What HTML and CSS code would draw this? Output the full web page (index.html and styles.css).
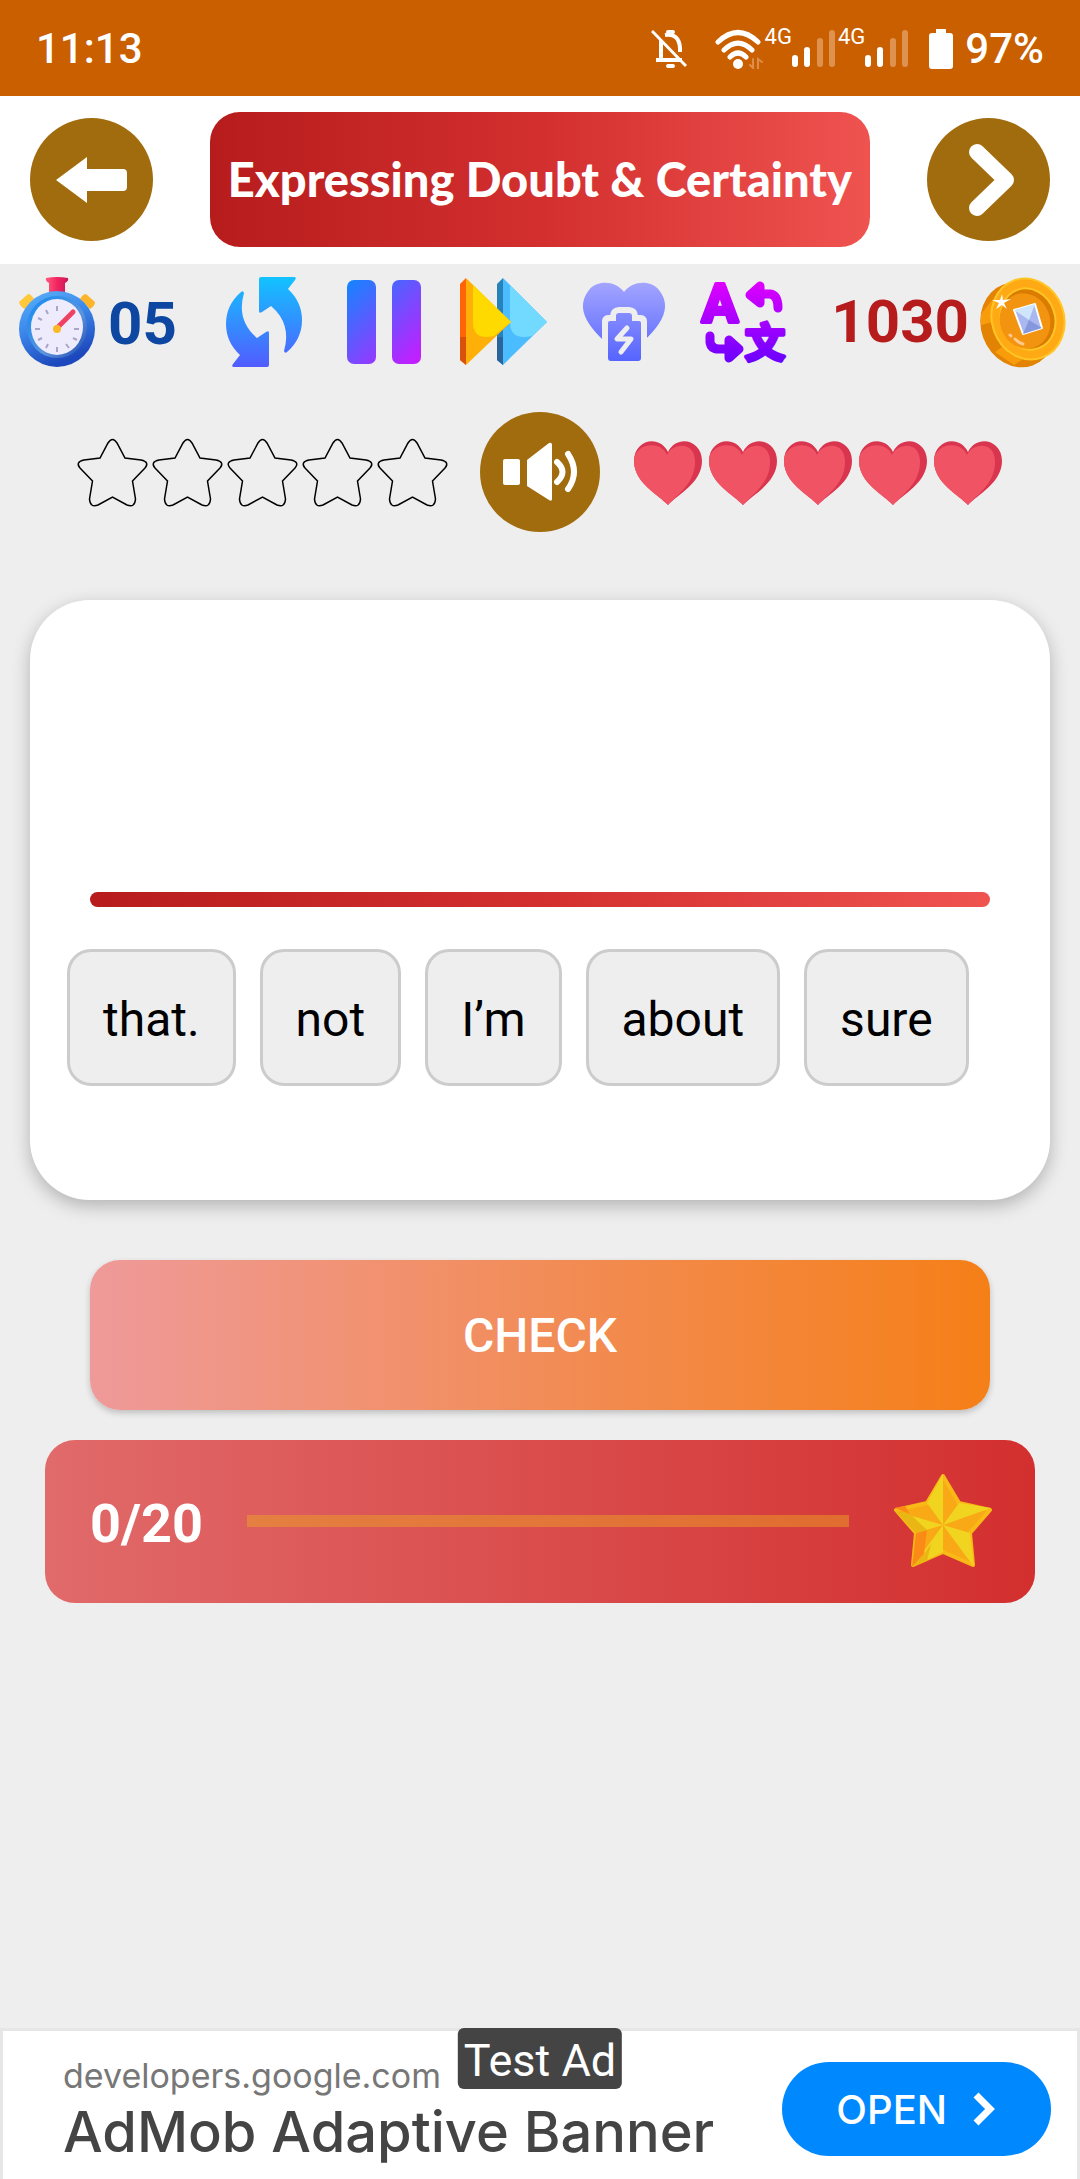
FILE: index.html
```html
<!DOCTYPE html>
<html lang="en">
<head>
    <meta charset="UTF-8">
    <meta name="viewport" content="width=device-width, initial-scale=1.0">
    <title>Expressing Doubt &amp; Certainty</title>
    <link rel="stylesheet" href="styles.css">
</head>
<body>
    <!-- Status bar -->
    <div class="status-bar">
        <span class="clock">11:13</span>
        <div class="status-icons">
            <svg class="bell" viewBox="0 0 36 38" fill="none" stroke="#fff" stroke-width="4">
                <path d="M10 10V30M5 30H31M14 5Q28 3 29 18V22" />
                <path d="M17 2H22M17 36H22" stroke-linecap="round" />
                <path d="M1 1L35 36" stroke-width="3" />
            </svg>
            <svg class="wifi" viewBox="0 0 50 40" fill="none" stroke="#fff" stroke-width="5" stroke-linecap="round">
                <path d="M3 13Q23 -6 43 13M9 21Q23 7 37 21M15 28Q23 20 31 28" />
                <circle cx="23" cy="35" r="5" fill="#fff" stroke="none" />
                <path d="M38 30V39L35 36M43 40V30L47 33" stroke="#dd8e4d" stroke-width="2" />
            </svg>
            <div class="network">
                <span>4G</span>
                <svg class="signal" viewBox="0 0 43 40" stroke="#fff" stroke-width="6" stroke-linecap="round">
                    <path d="M3 29V35M15 21V35" />
                    <path d="M28 12V35M40 4V35" stroke="#df9250" />
                </svg>
            </div>
            <div class="network">
                <span>4G</span>
                <svg class="signal" viewBox="0 0 43 40" stroke="#fff" stroke-width="6" stroke-linecap="round">
                    <path d="M3 29V35M15 21V35" />
                    <path d="M28 12V35M40 4V35" stroke="#df9250" />
                </svg>
            </div>
            <svg class="battery" viewBox="0 0 24 40" fill="#fff">
                <rect x="7" width="10" height="10" />
                <rect y="4" width="24" height="36" rx="3" />
            </svg>
            <span class="percent">97%</span>
        </div>
    </div>

    <!-- Lesson header -->
    <header class="header">
        <button class="round-button" aria-label="Back">
            <svg viewBox="0 0 123 123" fill="#fff">
                <path d="M26 62L57 39V51H93Q97 51 97 55V69Q97 73 93 73H57V85Z" />
            </svg>
        </button>
        <h1 class="title">Expressing Doubt &amp; Certainty</h1>
        <button class="round-button" aria-label="Next">
            <svg viewBox="0 0 123 123" fill="none" stroke="#fff" stroke-width="16" stroke-linecap="round" stroke-linejoin="round">
                <path d="M50 34L79 62L50 90" />
            </svg>
        </button>
    </header>

    <main class="lesson">
        <div class="toolbar">
            <div class="timer">
                <svg class="icon" viewBox="0 0 90 90">
                    <defs>
                        <linearGradient id="ring" x1="0" y1="0" x2="0.4" y2="1">
                            <stop offset="0" stop-color="#5db4fa" />
                            <stop offset="0.5" stop-color="#3b86ea" />
                            <stop offset="1" stop-color="#1d48bd" />
                        </linearGradient>
                        <linearGradient id="rim" x1="0" y1="0" x2="1" y2="1">
                            <stop offset="0" stop-color="#0f8bf5" />
                            <stop offset="0.6" stop-color="#5c94dc" />
                            <stop offset="1" stop-color="#1c46ae" />
                        </linearGradient>
                        <linearGradient id="crown">
                            <stop offset="0" stop-color="#ff5b7c" />
                            <stop offset="0.5" stop-color="#f22560" />
                            <stop offset="1" stop-color="#c8185c" />
                        </linearGradient>
                    </defs>
                    <path d="M34 1Q45 -1 56 1Q57 4 53 6V16H37V6Q33 4 34 1Z" fill="url(#crown)" />
                    <path d="M7 25L16 17Q19 17 22 22L13 32Q8 30 7 25Z" fill="#ffc83b" />
                    <path d="M83 25L74 17Q71 17 68 22L78 32Q83 29 83 25Z" fill="#fcb52b" />
                    <circle cx="45" cy="52" r="38" fill="url(#ring)" />
                    <ellipse cx="45" cy="50" rx="30" ry="31" fill="url(#rim)" />
                    <ellipse cx="45" cy="50" rx="26" ry="28" fill="#eeecfc" />
                    <path d="M45 29V34M45 70V75M23 52H28M62 52H67M34 33L36 37M54 67L57 71M34 71L36 67M26 41L30 43M26 63L30 61M61 61L65 63" stroke="#aaa5c6" stroke-width="2" />
                    <path d="M46 50L61 35" stroke="#ef4263" stroke-width="5" stroke-linecap="round" />
                    <circle cx="45" cy="52" r="4" fill="#fbb928" />
                </svg>
                <span class="seconds">05</span>
            </div>

            <div class="tools">
                <button class="tool" aria-label="Restart">
                    <svg class="icon" viewBox="0 0 90 90">
                        <defs>
                            <linearGradient id="turn" gradientUnits="userSpaceOnUse" x1="0" y1="0" x2="0" y2="90">
                                <stop offset="0" stop-color="#12c3ff" />
                                <stop offset="1" stop-color="#525cff" />
                            </linearGradient>
                        </defs>
                        <path fill="url(#turn)" d="M40 2Q40 0 42 0H75Q78 0 76 3L69 12Q83 25 83 43Q83 62 68 75Q66 77 65 74Q73 47 52 29L43 35Q40 37 40 34Z" />
                        <path fill="url(#turn)" d="M50 88Q50 90 48 90H15Q12 90 14 87L21 78Q7 65 7 47Q7 28 22 15Q24 13 25 16Q17 43 38 61L47 55Q50 53 50 56Z" />
                    </svg>
                </button>
                <button class="tool" aria-label="Pause">
                    <svg class="icon" viewBox="0 0 90 90">
                        <defs>
                            <linearGradient id="pause" gradientUnits="userSpaceOnUse" x1="5" y1="10" x2="80" y2="85">
                                <stop offset="0" stop-color="#1783ff" />
                                <stop offset="1" stop-color="#c81bff" />
                            </linearGradient>
                        </defs>
                        <rect x="8" y="3" width="29" height="84" rx="7" fill="url(#pause)" />
                        <rect x="53" y="3" width="29" height="84" rx="7" fill="url(#pause)" />
                    </svg>
                </button>
                <button class="tool" aria-label="Skip">
                    <svg class="icon" viewBox="0 0 90 90">
                        <path d="M44 1L38 7V83L44 88Z" fill="#2882ba" />
                        <path d="M38 60H44V88L38 83Z" fill="#2b649a" />
                        <path d="M44 1L88 45L44 88Z" fill="#4bbcff" />
                        <path d="M51 8L88 45L73 59Q51 64 51 45Z" fill="#73daff" />
                        <path d="M7 1L1 7V83L7 88Z" fill="#ff6508" />
                        <path d="M1 60H7V88L1 83Z" fill="#d9520c" />
                        <path d="M7 1L52 45L7 88Z" fill="#ffb008" />
                        <path d="M14 8L52 45L35 59Q14 64 14 45Z" fill="#ffda00" />
                    </svg>
                </button>
                <button class="tool" aria-label="Refill hearts">
                    <svg class="icon" viewBox="0 0 90 90">
                        <defs>
                            <linearGradient id="refill" gradientUnits="userSpaceOnUse" x1="0" y1="5" x2="0" y2="84">
                                <stop offset="0" stop-color="#a3a5ff" />
                                <stop offset="1" stop-color="#5664ff" />
                            </linearGradient>
                        </defs>
                        <path d="M45 15C54 3 72 3 80 13C98 36 73 58 45 81C17 58 -8 36 10 13C18 3 36 3 45 15Z" fill="url(#refill)" />
                        <path class="cutout" d="M29 44H37V39Q37 36 40 36H50Q53 36 53 39V44H62V90H29Z" stroke-width="12" stroke-linejoin="round" />
                        <path d="M31 44H37V39Q37 36 40 36H50Q53 36 53 39V44H60Q62 44 62 46V81Q62 84 59 84H32Q29 84 29 81V46Q29 44 31 44Z" fill="url(#refill)" />
                        <path d="M48 51L38 62H52L42 75" fill="none" stroke="#eee" stroke-width="5" stroke-linecap="round" stroke-linejoin="round" />
                    </svg>
                </button>
                <button class="tool" aria-label="Translate">
                    <svg class="icon translate" viewBox="0 0 90 90">
                        <defs>
                            <linearGradient id="lang" gradientUnits="userSpaceOnUse" x1="0" y1="5" x2="0" y2="85">
                                <stop offset="0" stop-color="#df00ff" />
                                <stop offset="1" stop-color="#6c00ff" />
                            </linearGradient>
                        </defs>
                        <g fill="url(#lang)" stroke="url(#lang)" stroke-linejoin="round">
                            <text class="latin" x="21" y="45" text-anchor="middle">A</text>
                            <text class="han" x="66" y="80" text-anchor="middle">文</text>
                            <path d="M51 18L61 9V26Z" stroke-width="9" />
                            <path d="M40 72L30 63V81Z" stroke-width="9" />
                        </g>
                        <path d="M60 17H71Q79 18 79 31M11 59V65Q12 72 20 72H32" fill="none" stroke="url(#lang)" stroke-width="9" stroke-linecap="round" />
                    </svg>
                </button>
            </div>

            <div class="coins">
                <span>1030</span>
                <svg class="icon" viewBox="0 0 90 90">
                    <ellipse cx="40" cy="48" rx="37" ry="43" transform="rotate(-20 40 48)" fill="#e38304" />
                    <path d="M3 37L15 22V45L3 48ZM17 75L27 68L48 80L36 88Z" fill="#f99c0c" />
                    <ellipse cx="50" cy="42" rx="36" ry="41" transform="rotate(-20 50 42)" fill="#ffaa14" stroke="#ffc526" stroke-width="2" />
                    <ellipse cx="50" cy="42" rx="27" ry="31" transform="rotate(-20 50 42)" fill="#d97c00" stroke="#ffc526" stroke-width="2" />
                    <ellipse cx="47" cy="44" rx="25" ry="28" transform="rotate(-20 47 44)" fill="#f39410" />
                    <path d="M36 33L57 27L64 51L45 57Z" fill="#aab8ef" stroke="#fff" stroke-width="2" stroke-linejoin="round" />
                    <path d="M36 33L57 27L51 43Z" fill="#cfe5fc" />
                    <path d="M45 57L51 43L64 51Z" fill="#8598dd" />
                    <path d="M32 58L33 59M37 62Q41 66 45 67" fill="none" stroke="#ffc88c" stroke-width="3" stroke-linecap="round" />
                    <path d="M24 17L25 23L33 22L26 26L29 32L24 28L18 32L21 26L14 23L22 23Z" fill="#fff" />
                </svg>
            </div>
        </div>

        <!-- Shapes repeated in the score row -->
        <svg class="symbols" aria-hidden="true">
            <symbol id="star" viewBox="0 0 75 75">
                <path d="M33 8Q37.500 1 42 8L50 23L66 25Q75 27 70 33L57.500 46L60.500 64Q60 73 52 70L37.500 62L23 70Q15 73 14.500 64L17.500 46L5 33Q0 27 9 25L25 23Z" fill="none" stroke="#000" stroke-width="1.500" />
            </symbol>
            <symbol id="heart" viewBox="0 0 75 75">
                <path d="M38 70C29 60 4 48 4 26C4 5 29 -1 38 17C47 -1 72 5 72 26C72 48 47 60 38 70Z" fill="#da354f" />
                <path d="M38 70C29 60 4 48 4 26C4 9 30 4 37 20C42 8 65 5 65 27C65 48 48 59 38 70Z" fill="#f05464" />
            </symbol>
        </svg>

        <div class="score">
            <div class="score-group">
                <svg class="mark"><use href="#star" /></svg>
                <svg class="mark"><use href="#star" /></svg>
                <svg class="mark"><use href="#star" /></svg>
                <svg class="mark"><use href="#star" /></svg>
                <svg class="mark"><use href="#star" /></svg>
            </div>
            <button class="round-button speaker" aria-label="Play sound">
                <svg viewBox="0 0 120 120" fill="#fff">
                    <rect x="23" y="47" width="17" height="26" rx="2" />
                    <path d="M47 48L69 31Q72 30 72 33V87Q72 90 69 88L47 74Z" />
                    <path d="M77 50Q88 60 77 70M88 42Q100 60 88 77" fill="none" stroke="#fff" stroke-width="6" stroke-linecap="round" />
                </svg>
            </button>
            <div class="score-group">
                <svg class="mark"><use href="#heart" /></svg>
                <svg class="mark"><use href="#heart" /></svg>
                <svg class="mark"><use href="#heart" /></svg>
                <svg class="mark"><use href="#heart" /></svg>
                <svg class="mark"><use href="#heart" /></svg>
            </div>
        </div>

        <section class="card">
            <div class="answer"></div>
            <div class="words">
                <button class="word">that.</button>
                <button class="word">not</button>
                <button class="word">I’m</button>
                <button class="word">about</button>
                <button class="word">sure</button>
            </div>
        </section>

        <button class="check">CHECK</button>

        <div class="progress-card">
            <label for="progress">0/20</label>
            <progress id="progress" value="0" max="20"></progress>
            <svg class="gold-star" viewBox="0 0 100 100">
                <path d="M50 5L66 32L97 39L77 62L80 94L50 81L20 94L23 62L3 39L34 32Z" fill="#f9a916" stroke="#f9b916" stroke-width="4" stroke-linejoin="round" />
                <path d="M50 3L34 32L50 54ZM66 32L98 37L50 54ZM77 62L81 96L50 54ZM50 81L19 96L50 54ZM23 62L2 40L50 54Z" fill="#f1d41f" />
                <path d="M2 37L12 35L17 43ZM23 62L34 59L31 83L19 96Z" fill="#fb8b16" />
                <path d="M2 40L17 43L34 59L23 62ZM31 83L38 73L34 90L19 96Z" fill="#e9b613" />
            </svg>
        </div>
    </main>

    <!-- Ad banner -->
    <footer class="ad">
        <span class="ad-label">Test Ad</span>
        <div class="ad-text">
            <div class="ad-site">developers.google.com</div>
            <div class="ad-name">AdMob Adaptive Banner</div>
        </div>
        <a class="ad-open" href="#">
            OPEN
            <svg viewBox="0 0 24 34" fill="none" stroke="#fff" stroke-width="7">
                <path d="M3 3L17 17L3 31" />
            </svg>
        </a>
    </footer>
</body>
</html>
```
FILE: styles.css
```css
* {
    box-sizing: border-box;
}

body {
    margin: 0;
    min-height: 100vh;
    display: flex;
    flex-direction: column;
    font-family: Roboto, "Liberation Sans", sans-serif;
    background: #eee;
    color: #000;
}

button {
    font-family: inherit;
    border: none;
    padding: 0;
    cursor: pointer;
}

svg {
    display: block;
    flex-shrink: 0;
}

/* Status bar */
.status-bar {
    height: 96px;
    padding: 2px 36px 0;
    display: flex;
    align-items: center;
    justify-content: space-between;
    background: #ca5f00;
    color: #fff;
    font-size: 42px;
    font-weight: 500;
    line-height: 48px;
}

.status-icons {
    display: flex;
    align-items: center;
}

.bell {
    width: 36px;
    height: 38px;
    margin-right: 28px;
}

.wifi {
    width: 50px;
    height: 40px;
}

.network {
    display: flex;
    align-items: flex-start;
    font-size: 22px;
    font-weight: 400;
    line-height: 16px;
    margin-right: 3px;
}

.signal {
    width: 43px;
    height: 40px;
}

.battery {
    width: 24px;
    height: 40px;
    margin: 0 12px 0 18px;
}

/* Header */
.header {
    min-height: 168px;
    padding: 15px 30px 17px;
    display: flex;
    align-items: center;
    justify-content: space-between;
    background: #fff;
}

.round-button {
    width: 123px;
    height: 123px;
    flex-shrink: 0;
    border-radius: 50%;
    background: #a16c0e;
}

.title {
    margin: 0;
    width: 660px;
    padding: 43px 0 44px;
    border-radius: 30px;
    background: linear-gradient(to right, #b71c1c, #d32f2f, #ef5350);
    color: #fff;
    font-family: Lato, sans-serif;
    font-size: 47px;
    font-weight: 900;
    line-height: 48px;
    text-align: center;
    white-space: nowrap;
}

/* Lesson */
.toolbar {
    padding: 13px 12px 0;
    display: flex;
    align-items: center;
    justify-content: space-between;
    font-size: 60px;
    font-weight: 700;
    line-height: 72px;
}

.icon {
    width: 90px;
    height: 90px;
    overflow: visible;
}

.timer,
.coins {
    display: flex;
    align-items: center;
    gap: 6px;
}

.timer {
    color: #0d47a1;
}

.seconds {
    padding-top: 4px;
}

.coins {
    color: #b71c1c;
    gap: 9px;
}

.tools {
    display: flex;
    gap: 30px;
}

.tool {
    background: none;
}

.cutout {
    fill: #eee;
    stroke: #eee;
}

.translate text {
    stroke-width: 4px;
    line-height: 1;
}

.latin {
    font-size: 54px;
    font-weight: 700;
}

.han {
    font-family: "Noto Sans CJK SC", sans-serif;
    font-size: 40px;
    font-weight: 700;
}

.symbols {
    position: absolute;
    width: 0;
    height: 0;
}

.score {
    margin-top: 45px;
    display: flex;
    align-items: center;
    justify-content: center;
    gap: 30px;
}

.score-group {
    display: flex;
}

.mark {
    width: 75px;
    height: 75px;
}

.speaker {
    width: 120px;
    height: 120px;
}

.card {
    margin: 68px 30px 60px;
    min-height: 600px;
    padding-bottom: 114px;
    border-radius: 60px;
    background: #fff;
    box-shadow: 0 6px 18px rgba(0, 0, 0, 0.25);
}

.answer {
    height: 307px;
    margin: 0 60px;
    display: flex;
    flex-direction: column;
    justify-content: flex-end;
}

.answer::after {
    content: "";
    height: 15px;
    border-radius: 8px;
    background: linear-gradient(to right, #b71c1c, #d32f2f, #ef5350);
}

.words {
    display: flex;
    flex-wrap: wrap;
    gap: 24px;
    padding: 42px 37px 0;
}

.word {
    padding: 39px 33px 35px;
    border: 3px solid #ccc;
    border-radius: 24px;
    background: #eee;
    color: #000;
    font-size: 48px;
    line-height: 57px;
}

.check {
    display: block;
    width: calc(100% - 180px);
    height: 150px;
    margin: 0 90px 30px;
    border-radius: 30px;
    background: linear-gradient(to right, #ef9a9a, #f57f17);
    box-shadow: 0 3px 6px rgba(0, 0, 0, 0.2);
    color: #fff;
    font-size: 48px;
    font-weight: 500;
}

.progress-card {
    margin: 0 45px;
    padding: 31px 42px 32px 45px;
    display: flex;
    align-items: center;
    gap: 44px;
    border-radius: 30px;
    background: linear-gradient(to right, #e16a6a, #d32f2f);
    color: #fff;
    font-size: 54px;
    font-weight: 700;
}

.progress-card label {
    padding-top: 4px;
}

progress {
    flex: 1;
    min-width: 0;
    height: 12px;
    border: none;
    appearance: none;
    background: rgba(236, 160, 37, 0.5);
}

progress::-webkit-progress-bar {
    background: none;
}

progress::-webkit-progress-value {
    background: #f9a825;
}

.gold-star {
    width: 100px;
    height: 100px;
}

/* Ad banner */
.ad {
    position: relative;
    margin-top: auto;
    padding: 22px 26px 14px 60px;
    display: flex;
    align-items: center;
    justify-content: space-between;
    border: 3px solid #e6e6e6;
    border-bottom: none;
    background: #fff;
    font-family: Inter, sans-serif;
}

.ad-label {
    position: absolute;
    top: -3px;
    left: 50%;
    transform: translateX(-50%);
    padding: 7px 6px 3px;
    border-radius: 6px;
    background: #444;
    color: #fff;
    font-family: Roboto, sans-serif;
    font-size: 45px;
    line-height: 51px;
    white-space: nowrap;
}

.ad-text {
    white-space: nowrap;
}

.ad-site {
    color: #777;
    font-size: 34px;
    line-height: 46px;
}

.ad-name {
    color: #444;
    font-size: 56px;
    font-weight: 500;
    line-height: 66px;
}

.ad-open {
    height: 94px;
    padding: 0 54px;
    display: flex;
    align-items: center;
    gap: 26px;
    border-radius: 47px;
    background: #08f;
    color: #fff;
    font-size: 40px;
    font-weight: 500;
    text-decoration: none;
}

.ad-open svg {
    width: 24px;
    height: 34px;
}
```
